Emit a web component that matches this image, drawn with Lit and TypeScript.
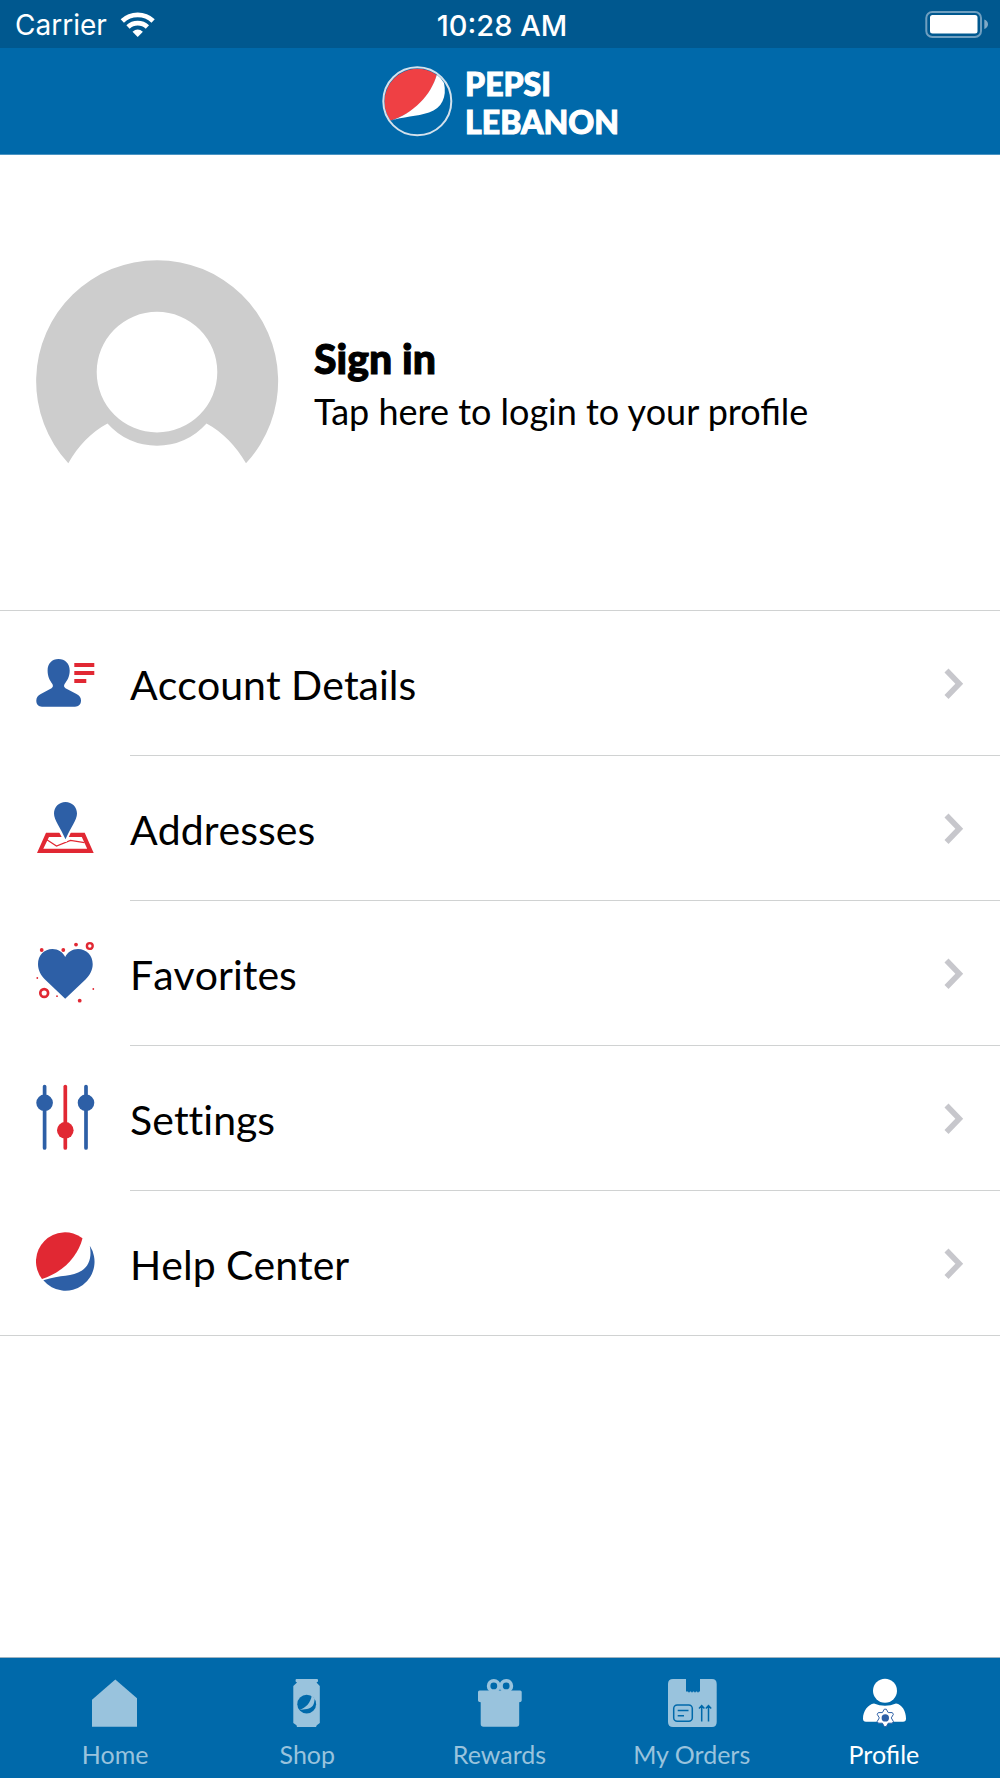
import { LitElement, html, css, svg, TemplateResult } from "lit";
import { customElement, property, state } from "lit/decorators.js";
import { classMap } from "lit/directives/class-map.js";

const BLUE = "#2d5fa6";
const RED = "#e12833";
const BAR = "#0069aa";

const menuIcons: Record<string, TemplateResult> = {
  account: svg`
    <path fill=${BLUE} d="M22.5 10C29 10 33.7 14.500 33.700 21.500C33.700 28 31 31.500 28.600 35C27.600 36.800 28 38.200 29.500 39.200L40.500 45C43.500 46.600 45 48.500 45 51.500C45 55.500 42.500 57.700 39 57.700H6C2.500 57.700 0.300 55.500 0.300 51.500C0.300 48.500 1.800 46.600 4.800 45L15.500 39.200C17 38.200 17.300 36.800 16.400 35C14 31.500 11.600 28 11.600 21.500C11.600 14.500 16 10 22.500 10Z"/>
    <path fill=${RED} d="M38.300 14H58.300V18H38.300ZM38.300 22H58.300V26H38.300ZM38.300 30H50.300V34H38.300Z"/>`,
  address: svg`
    <path fill=${RED} fill-rule="evenodd" d="M10 38.700H48.700L57.700 59H1ZM13 43L7.300 54.800H51.200L45.800 43Z"/>
    <path fill="none" stroke=${RED} stroke-width="1.200" d="M10.500 45.600L20.500 52L34.500 46.400L48.500 48.600"/>
    <path fill="#fff" d="M22.500 37H35.500L30.500 48H28.300Z"/>
    <path fill=${BLUE} d="M29.500 8C36 8 41 13 41 19.500C41 26 34.500 34 29.500 45.200C24.500 34 18 26 18 19.500C18 13 23 8 29.500 8Z"/>`,
  favorite: svg`
    <path fill=${BLUE} d="M29.200 18C31.500 13 36.500 10 42 10C50.500 10 56.700 16.500 56.700 25C56.700 31 54 36 49.500 40.400L29.200 59.700L9 40.400C4.500 36 2 31 2 25C2 16.500 8 10 16.500 10C22 10 27 13 29.200 18Z"/>
    <g fill=${RED}>
      <circle cx="5.700" cy="11" r="1.900"/><circle cx="27.300" cy="11" r="1.900"/>
      <circle cx="40" cy="5.600" r="1.900"/><circle cx="43.700" cy="61.700" r="1.900"/>
      <circle cx="1.300" cy="39" r="0.900"/><circle cx="21" cy="57.200" r="0.900"/>
      <circle cx="57.300" cy="50" r="0.900"/>
    </g>
    <circle cx="53.800" cy="7" r="2.900" fill="none" stroke=${RED} stroke-width="2.400"/>
    <circle cx="8.200" cy="54" r="3.900" fill="none" stroke=${RED} stroke-width="2.700"/>`,
  settings: svg`
    <g stroke-width="3.700" stroke-linecap="round">
      <path stroke=${BLUE} d="M8.600 2.500V64M50 2.500V64"/>
      <path stroke=${RED} d="M29.300 2.500V64"/>
    </g>
    <circle cx="8.600" cy="18.800" r="8.300" fill=${BLUE}/>
    <circle cx="50" cy="18.800" r="8.300" fill=${BLUE}/>
    <circle cx="29.300" cy="46.300" r="8.300" fill=${RED}/>`,
  help: svg`
    <path fill=${RED} d="M6 51A29 29 0 0 1 46.500 10.200C42 28 27.500 44 6 51Z"/>
    <path fill=${BLUE} d="M7.300 52.300C25 46.500 36 49 46 42.500C53 37.500 56 29.500 53.800 17.800A29 29 0 0 1 7.300 52.300Z"/>`,
};

const tabIcons: Record<string, TemplateResult> = {
  home: svg`<path fill="currentColor" d="M28.300 1.500L50 20.300V48.800H5V21.800Z"/>`,
  shop: svg`
    <path fill="currentColor" d="M17.500 1H38Q39 1 39 2V3.500L37.500 4.500L40.800 8V45L37.800 47.200L37 49H18L17.500 47.200L14.300 45V8L18 4.500L16.600 3.500V2Q16.600 1 17.500 1Z"/>
    <circle cx="27.700" cy="26.200" r="9.400" fill=${BAR}/>
    <path fill="currentColor" d="M20.500 32C27 29.500 31.500 25 32.800 17.500L35.600 20.500C35.500 26.500 33.500 30 28 31C25 31.500 23 31.400 20.500 32Z"/>`,
  rewards: svg`
    <g fill="none" stroke="currentColor" stroke-width="3.600"><circle cx="21.800" cy="7.900" r="5.200"/><circle cx="34.200" cy="7.900" r="5.200"/></g>
    <path fill="currentColor" d="M7.500 12.600H48.200Q49.700 12.600 49.700 14.100V22.500Q49.700 24.300 47.200 24.300V46Q47.200 48.800 44.500 48.800H11.500Q8.700 48.800 8.700 46V24.300Q6 24.300 6 22.500V14.100Q6 12.600 7.500 12.600Z"/>`,
  orders: svg`
    <path fill="currentColor" d="M9 1H22V13.500H24L25 14.700L26 13.500H27L28 14.700L29 13.500H30L31 14.700L32 13.500H33L34 14.700L35 13.500H36V1H48Q52.700 1 52.700 6V44Q52.700 49 48 49H9Q4 49 4 44V6Q4 1 9 1Z"/>
    <g fill="none" stroke=${BAR} stroke-width="1.500">
      <rect x="9.700" y="27" width="18.600" height="16.200" rx="3.500"/>
      <path d="M13.700 32.600H24.500M13.700 37.700H20M37.700 43.600V28.500M35 30.500L37.700 27.600L40.400 30.500M44.500 43.600V28.500M41.800 30.500L44.500 27.600L47.200 30.500"/>
    </g>`,
  profile: svg`
    <circle cx="29" cy="12.700" r="12" fill="currentColor"/>
    <path fill="currentColor" d="M18 25.500Q29 30 40 25.500C46 26.500 50 33 50 40.500Q50 43.700 47 43.700H10Q7 43.700 7 40.500C7 33 12 26.500 18 25.500Z"/>
    <path fill="#fff" stroke=${BLUE} stroke-width="1" stroke-linejoin="round" d="M28.300 31.200H30.300L32.200 34.600L36.300 34.600L37.400 36.300L35.300 39.900L37.400 43.500L36.300 45.200L32.200 45.200L30.300 48.600H28.300L26.400 45.200L22.300 45.200L21.200 43.500L23.300 39.900L21.200 36.300L22.300 34.600L26.400 34.600Z"/>
    <circle cx="29.300" cy="39.900" r="3.700" fill=${BLUE}/>`,
};

@customElement("menu-row")
class MenuRow extends LitElement {
  @property() icon = "";
  @property() label = "";

  static styles = css`
    :host { display: block; }
    .row {
      display: flex; align-items: stretch; height: 145px; box-sizing: border-box;
      color: #000; text-decoration: none;
    }
    .icon { flex: none; width: 60px; height: 68px; align-self: center; margin: 0 34px 2px 36px; }
    .body {
      flex: 1; display: flex; align-items: center; justify-content: space-between;
      border-bottom: 1px solid #d0d2d2; padding-right: 36px; box-sizing: border-box;
    }
    .label {
      font-size: 41px; line-height: 50px; padding-top: 4px;
      font-kerning: none; font-variant-ligatures: none;
    }
    .chevron { flex: none; width: 20px; height: 32px; }
    :host([last]) .row { border-bottom: 1px solid #d0d2d2; }
    :host([last]) .body { border-bottom: 0; }
  `;

  render() {
    return html`<a class="row" href="#${this.icon}">
      <svg class="icon" viewBox="0 0 60 68" aria-hidden="true">${menuIcons[this.icon]}</svg>
      <span class="body">
        <span class="label">${this.label}</span>
        <svg class="chevron" viewBox="0 0 20 32" aria-hidden="true">
          <path d="M2.500 3.500L15.300 16.700L2.500 30" fill="none" stroke="#c7c7cc" stroke-width="5.600"/>
        </svg>
      </span>
    </a>`;
  }
}

@customElement("app-root")
class AppRoot extends LitElement {
  @state() private active = "profile";

  private rows = [
    ["account", "Account Details"],
    ["address", "Addresses"],
    ["favorite", "Favorites"],
    ["settings", "Settings"],
    ["help", "Help Center"],
  ];
  private tabs = [
    ["home", "Home"],
    ["shop", "Shop"],
    ["rewards", "Rewards"],
    ["orders", "My Orders"],
    ["profile", "Profile"],
  ];

  static styles = css`
    :host {
      display: flex; flex-direction: column; min-height: 100vh;
      background: #fff; color: #000; font-family: Lato, "Liberation Sans", sans-serif;
    }
    .status {
      display: grid; grid-template-columns: 1fr auto 1fr; align-items: center;
      height: 48px; padding: 0 11px 0 15px; box-sizing: border-box;
      background: #00588f; color: #fff;
      font: 400 28px/34px Inter, "Liberation Sans", sans-serif;
    }
    .carrier { display: flex; align-items: center; gap: 13px; padding-top: 2px; }
    .wifi { width: 36px; height: 27px; }
    .time { font-size: 29px; font-weight: 500; padding-top: 3px; }
    .battery { width: 64px; height: 28px; justify-self: end; }
    .brand {
      display: flex; align-items: center; justify-content: center; gap: 12px;
      height: 107px; box-sizing: border-box; background: #0069aa;
      border-bottom: 1px solid #4a94c3; color: #fff;
    }
    .globe { width: 72px; height: 72px; }
    .name {
      margin: 0; padding-top: 3px; font-size: 32px; line-height: 38px; font-weight: 900;
      -webkit-text-stroke: 1px currentColor;
    }
    .name span { display: block; }
    .signin {
      display: flex; align-items: center; gap: 35px; width: 100%; height: 455px;
      padding: 0 36px; border: 0; background: none; color: inherit;
      font: inherit; text-align: left; cursor: pointer;
    }
    .avatar { flex: none; width: 243px; height: 243px; overflow: visible; }
    .intro { padding-top: 5px; }
    .title {
      display: block; font-size: 41px; line-height: 52px; font-weight: 900;
      -webkit-text-stroke: 1px currentColor;
    }
    .hint { display: block; font-size: 36px; line-height: 52px; }
    .menu { border-top: 1px solid #d0d2d2; }
    main { flex: 1; }
    .tabs {
      display: flex; height: 121px; box-sizing: border-box; padding: 0 20px 0 19px;
      background: #0069aa; border-top: 1px solid #9fb4c2;
    }
    .tab {
      flex: 1; display: flex; flex-direction: column; align-items: center; gap: 11px;
      padding: 20px 0 0; border: 0; background: none; color: #99c3dd;
      font: 400 25px/30px Lato, "Liberation Sans", sans-serif; cursor: pointer;
    }
    .tab.active { color: #fff; }
    .tab svg { width: 56px; height: 50px; }
  `;

  render() {
    return html`
      <div class="status">
        <span class="carrier">Carrier
          <svg class="wifi" viewBox="0 0 36 27" aria-hidden="true">
            <g fill="none" stroke="#fff" stroke-width="4.800">
              <path d="M2.300 9A22.500 22.500 0 0 1 33.100 9"/>
              <path d="M8 15A14.300 14.300 0 0 1 27.400 15"/>
            </g>
            <path fill="#fff" d="M12.500 19.700Q17.700 15.300 22.900 19.700L17.700 25.100Z"/>
          </svg>
        </span>
        <span class="time">10:28 AM</span>
        <svg class="battery" viewBox="0 0 64 28" aria-hidden="true">
          <rect x="1.300" y="2" width="54.700" height="25" rx="6" fill="none" stroke="#6f9fc0" stroke-width="2"/>
          <rect x="5" y="5" width="47.500" height="18.500" rx="2.500" fill="#fff"/>
          <path d="M59.300 9.500Q63 11 63 14.300T59.300 19Z" fill="#7fa9c6"/>
        </svg>
      </div>
      <header class="brand">
        <svg class="globe" viewBox="0 0 72 72" aria-hidden="true">
          <path fill="#ef4044" d="M9.300 55.500A33 33 0 0 1 55.800 10C51 28 36 48 9.300 55.500Z"/>
          <path fill="#fff" d="M8.800 56C33 48.500 50 30 55.800 9.800Q60.500 13 63 18C66 32 61 43 48 47.500C36 51.500 22 51.500 8.800 56Z"/>
          <circle cx="36.300" cy="36.300" r="34" fill="none" stroke="#d3e1ec" stroke-width="2"/>
        </svg>
        <h1 class="name"><span>PEPSI</span><span>LEBANON</span></h1>
      </header>
      <main>
        <button class="signin">
          <svg class="avatar" viewBox="0 0 243 243" aria-hidden="true">
            <path fill="#cdcdcd" fill-rule="evenodd" d="M32.300 202.300A121 121 0 1 1 210 202.300C200 185 187 171.500 170.500 162.500A66 66 0 0 1 71.500 162.500C55 171.500 42 185 32.300 202.300ZM121 50.800A60.300 60.300 0 1 0 121 171.400A60.300 60.300 0 1 0 121 50.800Z"/>
          </svg>
          <span class="intro"><span class="title">Sign in</span><span class="hint">Tap here to login to your profile</span></span>
        </button>
        <nav class="menu" aria-label="Profile menu">
          ${this.rows.map(([icon, label], i) => html`<menu-row .icon=${icon} .label=${label} ?last=${i === this.rows.length - 1}></menu-row>`)}
        </nav>
      </main>
      <nav class="tabs" aria-label="Main">
        ${this.tabs.map(([id, label]) => html`
          <button class=${classMap({ tab: true, active: this.active === id })} @click=${() => (this.active = id)}>
            <svg viewBox="0 0 56 50" aria-hidden="true">${tabIcons[id]}</svg>
            <span>${label}</span>
          </button>`)}
      </nav>`;
  }
}
